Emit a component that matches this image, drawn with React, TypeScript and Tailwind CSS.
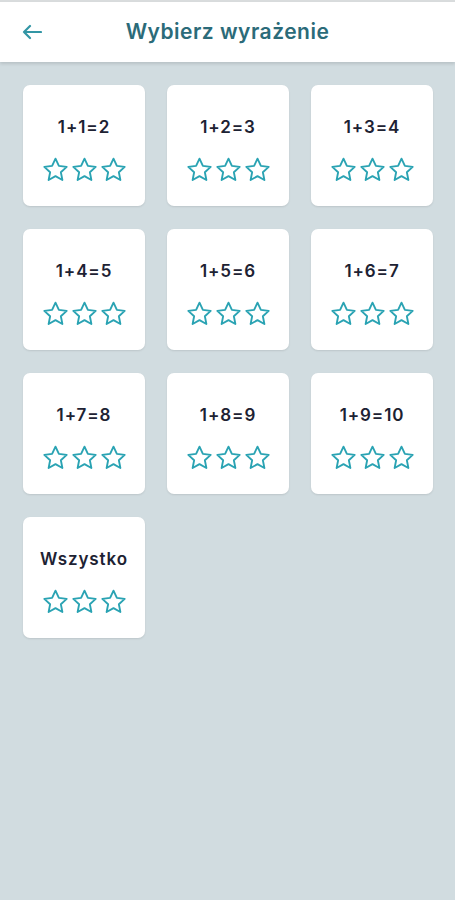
const items = [
  '1+1=2',
  '1+2=3',
  '1+3=4',
  '1+4=5',
  '1+5=6',
  '1+6=7',
  '1+7=8',
  '1+8=9',
  '1+9=10',
  'Wszystko',
]

function Star() {
  return (
    <svg width="29" height="28" viewBox="0 0 24 24" fill="none" stroke="#2aa3b3" strokeWidth="1.6" strokeLinejoin="round">
      <path d="M12 2.3l2.9 6.2 6.7.8-5 4.6 1.3 6.7L12 17.3l-5.9 3.3 1.3-6.7-5-4.6 6.7-.8z" />
    </svg>
  )
}

export default function App() {
  return (
    <div className="min-h-screen bg-[#d1dce0] font-['Inter',sans-serif]">
      {/* Header */}
      <header className="pt-[2px] bg-[#d9dcdd]">
        <div className="h-[60px] bg-white flex items-center relative shadow-[0_2px_3px_rgba(0,0,0,0.12)]">
          <svg className="absolute left-[22px] top-[21px]" width="20" height="18" viewBox="0 0 20 18" fill="none" stroke="#3396a5" strokeWidth="2.2" strokeLinecap="round" strokeLinejoin="round">
            <path d="M19 9H2M8 3L2 9l6 6" />
          </svg>
          <h1 className="w-full text-center text-[21px] font-semibold text-[#2b6b79] tracking-[0.5px]">Wybierz wyrażenie</h1>
        </div>
      </header>

      {/* Grid */}
      <main className="grid grid-cols-3 gap-x-[22px] gap-y-[23px] pl-[23px] pr-[22px] pt-[23px]">
        {items.map((t) => (
          <div key={t} className="h-[121px] bg-white rounded-[7px] shadow-[0_1px_2px_rgba(0,0,0,0.1)] flex flex-col items-center pt-[30px]">
            <p className="text-[17px] font-semibold text-[#1d2233] leading-[24px] tracking-[0.9px]">{t}</p>
            <div className="flex gap-0 mt-[17px] pl-[1px]">
              <Star />
              <Star />
              <Star />
            </div>
          </div>
        ))}
      </main>
    </div>
  )
}
